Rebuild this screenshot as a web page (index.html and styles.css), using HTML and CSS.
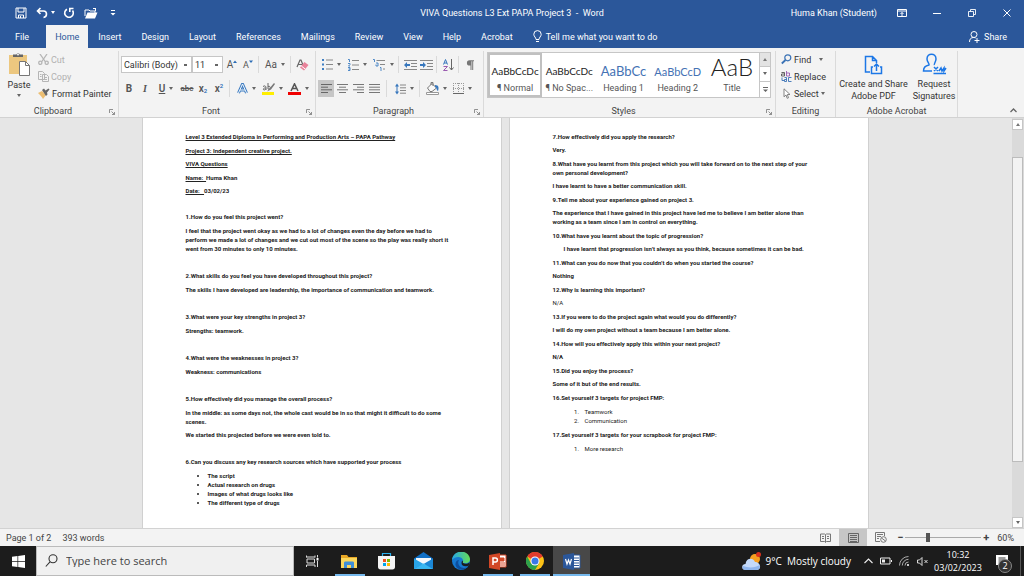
FILE: index.html
```html
<!DOCTYPE html>
<html lang="en">
<head>
<meta charset="utf-8">
<title>VIVA Questions L3 Ext PAPA Project 3 - Word</title>
<link rel="stylesheet" href="styles.css">
</head>
<body>
<div class="app">
<header class="titlebar">
  <div class="quick">
    <button class="tb-btn" aria-label="Save"><svg width="12" height="12" viewBox="0 0 12 12" fill="none" stroke="#fff"><path d="M1 1h10v10H1zM3 1v4h6V1M3.5 11V8h5v3M5.5 9v2"/></svg></button>
    <button class="tb-btn wide" aria-label="Undo"><svg width="12" height="12" viewBox="0 0 12 12" fill="none" stroke="#fff" stroke-width="1.6"><path d="M4.5 1 1.500 4l3 3M2 4h5.500c4 0 4 6 0 6.500"/></svg><i class="caret light"></i></button>
    <button class="tb-btn" aria-label="Repeat"><svg width="12" height="12" viewBox="0 0 12 12" fill="none" stroke="#fff" stroke-width="1.6"><path d="M4 2.200A4.300 4.300 0 1 0 9.500 3.500M6.800 5V1.500H10.500"/></svg></button>
    <button class="tb-btn" aria-label="Open"><svg width="14" height="12" viewBox="0 0 14 12"><path d="M1 9V3h4l1 1h5v2" fill="none" stroke="#fff"/><path d="M3.500 5.500H13.500l-2.500 6H1zM9 1h3v3h-1V2H9z" fill="#fff"/></svg></button>
    <button class="tb-btn" aria-label="Customize Quick Access Toolbar"><svg width="6" height="6" viewBox="0 0 6 6" fill="#fff"><path d="M1 0h4v1H1zM0.500 3h5L3 5.500z"/></svg></button>
  </div>
  <h1 class="doc-title">VIVA Questions L3 Ext PAPA Project 3&nbsp; -&nbsp; Word</h1>
  <div class="window-tools">
    <span class="user">Huma Khan (Student)</span>
    <button class="win-btn" aria-label="Ribbon Display Options"><svg width="10" height="8" viewBox="0 0 10 8" fill="none" stroke="#fff"><path d="M.5.5h9v7h-9zM.5 2h9M5 7V3.500M3.500 5 5 3.500 6.500 5"/></svg></button>
    <button class="win-btn" aria-label="Minimize"><svg width="8" height="8" viewBox="0 0 8 8" stroke="#fff"><path d="M0 4.500h8"/></svg></button>
    <button class="win-btn" aria-label="Restore"><svg width="8" height="8" viewBox="0 0 8 8" fill="none" stroke="#fff" stroke-width=".9"><path d="M.5 2.500h5v5h-5zM2.500 2.500v-2h5v5h-2"/></svg></button>
    <button class="win-btn" aria-label="Close"><svg width="8" height="8" viewBox="0 0 8 8" stroke="#fff"><path d="M.5.5l7 7M7.500.5l-7 7"/></svg></button>
  </div>
</header>
<nav class="tabs">
  <a class="tab file" href="#">File</a><a class="tab active" href="#">Home</a><a class="tab" href="#">Insert</a><a class="tab" href="#">Design</a><a class="tab" href="#">Layout</a><a class="tab" href="#">References</a><a class="tab" href="#">Mailings</a><a class="tab" href="#">Review</a><a class="tab" href="#">View</a><a class="tab" href="#">Help</a><a class="tab" href="#">Acrobat</a>
  <a class="tab tell" href="#"><svg width="9" height="13" viewBox="0 0 9 13" fill="none" stroke="#fff"><path d="M3 9.500C3 7.500.8 6.500.8 4.300a3.700 3.700 0 0 1 7.400 0C8.200 6.500 6 7.500 6 9.500zM3 11.500h3"/></svg>Tell me what you want to do</a>
  <a class="tab share" href="#"><svg width="11" height="12" viewBox="0 0 11 12" fill="none" stroke="#fff"><circle cx="5" cy="3.500" r="3"/><path d="M.5 11c0-3 1.500-4.500 4-4.500 1 0 1.500.2 2 .5M8 7v5M5.500 9.500h5"/></svg>Share</a>
</nav>

<section class="ribbon" aria-label="Home">
  <div class="group clipboard">
    <div class="group-body">
      <button class="paste"><svg width="23" height="24" viewBox="0 0 23 24"><path d="M1 3h18v19H1z" fill="#ecc77f"/><path d="M5 5V2.500h3.500a1.700 1.700 0 0 1 3.200 0H15V5z" fill="#666"/><circle cx="10" cy="2.500" r="1" fill="#f3f3f3"/><path d="M11.500 9.500h6l4 4v10h-10z" fill="#fff" stroke="#777"/><path d="M17.500 9.500v4h4" fill="none" stroke="#777"/></svg><span>Paste</span><i class="caret"></i></button>
      <div class="clip-list">
        <button class="cmd off"><svg width="11" height="11" viewBox="0 0 11 11" fill="none" stroke="#b5b5b5" stroke-width="1.300"><path d="M2 0l5.500 8M9 0 3.500 8"/><circle cx="2.300" cy="8.800" r="1.600"/><circle cx="8.700" cy="8.800" r="1.600"/></svg>Cut</button>
        <button class="cmd off"><svg width="11" height="11" viewBox="0 0 11 11" fill="#f3f3f3" stroke="#b5b5b5"><path d="M.5.5h4l2 2v6h-6zM4.500 3.500h4l2 2v5h-6zM6 6.500h3M6 8.500h3M2 3.500h1.500M2 5.500h1.500"/></svg>Copy</button>
        <button class="cmd"><svg width="12" height="11" viewBox="0 0 12 11"><path d="M0 5l4-2 4 4-3 4c-1-2-3-4-5-6z" fill="#ecbe72"/><path d="M4 2l2-1.500 1.500 2L10.500.5l1 1-2.500 3 .5 2L8 8z" fill="#666"/></svg>Format Painter</button>
      </div>
    </div>
    <div class="group-label">Clipboard<button class="launch" aria-label="Clipboard settings"><svg width="6" height="6" viewBox="0 0 6 6" fill="none" stroke="#777" stroke-width=".8"><path d="M.5 4V.5H4M2.500 2.500l3 3M5.500 3v2.500H3"/></svg></button></div>
  </div>

  <div class="group font">
    <div class="group-body rows">
      <div class="row">
        <select class="combo family" aria-label="Font"><option>Calibri (Body)</option></select><select class="combo size" aria-label="Font size"><option>11</option></select>
        <button class="ic letter" aria-label="Grow font">A<svg width="4" height="9" viewBox="0 0 4 9"><path d="M0 3l2-2.500L4 3z" fill="#2b6cb5"/></svg></button>
        <button class="ic letter small" aria-label="Shrink font">A<svg width="4" height="9" viewBox="0 0 4 9"><path d="M0 .5h4L2 3z" fill="#2b6cb5"/></svg></button>
        <i class="sep"></i>
        <button class="ic drop letter" aria-label="Change case">Aa<i class="caret"></i></button>
        <i class="sep"></i>
        <button class="ic" aria-label="Clear formatting"><svg width="13" height="12" viewBox="0 0 13 12"><path d="M1 8l3-7h1l2 5M2.500 5.500H6" fill="none" stroke="#666" stroke-width="1.200"/><path d="M8.500 3l4 3-4.500 5.500-4-3z" fill="#e8829a"/><path d="M5.300 7l3.900 3" stroke="#fff"/></svg></button>
      </div>
      <div class="row">
        <button class="ic letter bold">B</button><button class="ic letter italic">I</button><button class="ic drop letter under"><u>U</u><i class="caret"></i></button><button class="ic letter abc" aria-label="Strikethrough"><s>abc</s></button><button class="ic letter script" aria-label="Subscript">x<sub>2</sub></button><button class="ic letter script" aria-label="Superscript">x<sup>2</sup></button>
        <i class="sep"></i>
        <button class="ic drop" aria-label="Text effects"><svg width="11" height="11" viewBox="0 0 11 11" fill="none" stroke-linejoin="round"><path d="M1.500 10 5.500 1l4 9M3 7h5" stroke="#3d7cc1" stroke-width="3"/><path d="M1.500 10 5.500 1l4 9M3 7h5" stroke="#f3f7fb" stroke-width="1"/></svg><i class="caret"></i></button><button class="ic drop" aria-label="Highlight"><svg width="13" height="12" viewBox="0 0 13 12"><path d="M0 9h12v3H0z" fill="#ffee00"/><path d="M1 3.500c2-1.500 3 0 3 1V7M4 5C1 4.500 1 7 2 7s2-1 2-1M6 0v6c3 1.500 3-4 0-2.500" fill="none" stroke="#666"/><path d="M12 0 7 6 5 8.500 9 6.500 13 1z" fill="#777"/></svg><i class="caret"></i></button><button class="ic drop" aria-label="Font colour"><svg width="13" height="12" viewBox="0 0 13 12"><path d="M0 9h13v3H0z" fill="#f00000"/><path d="M3 8 6.500.8 10 8M4.200 5.500h4.600" fill="none" stroke="#555" stroke-width="1.500"/></svg><i class="caret"></i></button>
      </div>
    </div>
    <div class="group-label">Font<button class="launch" aria-label="Font settings"><svg width="6" height="6" viewBox="0 0 6 6" fill="none" stroke="#777" stroke-width=".8"><path d="M.5 4V.5H4M2.500 2.500l3 3M5.500 3v2.500H3"/></svg></button></div>
  </div>

  <div class="group paragraph">
    <div class="group-body rows">
      <div class="row">
        <button class="ic drop" aria-label="Bullets"><svg width="11" height="11" viewBox="0 0 11 11"><path d="M0 0h2v2H0zM0 4.500h2v2H0zM0 9h2v2H0z" fill="#3f7fc3"/><path d="M4 1h7M4 5.500h7M4 10h7" stroke="#888"/></svg><i class="caret"></i></button><button class="ic drop" aria-label="Numbering"><svg width="11" height="12" viewBox="0 0 11 12"><path d="M0 .5h1.500V3M0 4.500h2v1L.5 7H2M0 8.500h2v3H0M.5 10H2" fill="none" stroke="#3f7fc3" stroke-width=".9"/><path d="M4 1.500h7M4 6h7M4 10.500h7" stroke="#888"/></svg><i class="caret"></i></button><button class="ic drop" aria-label="Multilevel list"><svg width="13" height="12" viewBox="0 0 13 12"><path d="M0 .5h1.500V3M3 4h2v3H3V5.500M7 8.500h1V12" fill="none" stroke="#3f7fc3" stroke-width=".9"/><path d="M3.500 1.500H12M7 5.500h5M10 10h2" stroke="#888"/></svg><i class="caret"></i></button>
        <i class="sep"></i>
        <button class="ic" aria-label="Decrease indent"><svg width="13" height="10" viewBox="0 0 13 10"><path d="M0 .5h13M7 3.500h6M7 6.500h6M0 9.500h13" stroke="#888"/><path d="M0 5l3-3v2h3v2H3v2z" fill="#3777bd"/></svg></button><button class="ic" aria-label="Increase indent"><svg width="13" height="10" viewBox="0 0 13 10"><path d="M0 .5h13M7 3.500h6M7 6.500h6M0 9.500h13" stroke="#888"/><path d="M6 5 3 2v2H0v2h3v2z" fill="#3777bd"/></svg></button>
        <i class="sep"></i>
        <button class="ic" aria-label="Sort"><svg width="11" height="12" viewBox="0 0 11 12" fill="none"><path d="M.5 5.500 2.500.5l2 5M1 4h3" stroke="#3777bd"/><path d="M.5 7.500h4l-4 4h4" stroke="#9a5bb0"/><path d="M8.500 0v11M6.500 8.500l2 2.500 2-2.500" stroke="#666"/></svg></button>
        <i class="sep"></i>
        <button class="ic" aria-label="Show marks"><svg width="8" height="10" viewBox="0 0 8 10"><path d="M4.500 5.500H3.500a2.500 2.500 0 0 1 0-5.200H8v1H7.200V10h-1V1.300h-.7V10h-1z" fill="#777"/></svg></button>
      </div>
      <div class="row">
        <button class="ic on" aria-label="Align left"><svg width="11" height="9" viewBox="0 0 11 9" stroke="#666"><path d="M0 .5h11M0 3.200h7M0 5.800h11M0 8.500h7"/></svg></button><button class="ic" aria-label="Centre"><svg width="11" height="9" viewBox="0 0 11 9" stroke="#777"><path d="M0 .5h11M2 3.200h7M0 5.800h11M2 8.500h7"/></svg></button><button class="ic" aria-label="Align right"><svg width="11" height="9" viewBox="0 0 11 9" stroke="#777"><path d="M0 .5h11M4 3.200h7M0 5.800h11M4 8.500h7"/></svg></button><button class="ic" aria-label="Justify"><svg width="11" height="9" viewBox="0 0 11 9" stroke="#777"><path d="M0 .5h11M0 3.200h11M0 5.800h11M0 8.500h11"/></svg></button>
        <i class="sep wide"></i>
        <button class="ic drop" aria-label="Line spacing"><svg width="11" height="12" viewBox="0 0 11 12"><path d="M5 2h6M5 4.800h6M5 7.500h6M5 10.200h6" stroke="#888"/><path d="M0 3.500 2 .5l2 3H2.500v5H4l-2 3-2-3h1.500v-5z" fill="#3777bd"/></svg><i class="caret"></i></button>
        <i class="sep"></i>
        <button class="ic drop" aria-label="Shading"><svg width="13" height="13" viewBox="0 0 13 13"><path d="M1.500 6 6 1.500 10.500 6 6 9.500H4zM5 3V.5h2V4" fill="#f8f8f8" stroke="#777"/><path d="M9 3c4 0 4 3 3 6-2-1-1-4-3-4z" fill="#3777bd"/><path d="M.5 10.500h12v2H.5z" fill="#fff" stroke="#999"/></svg><i class="caret"></i></button><button class="ic drop" aria-label="Borders"><svg width="11" height="11" viewBox="0 0 11 11" fill="none" stroke="#999"><path d="M.5 0v10M10.500 0v10M5.500 0v10M0 .5h11M0 5.500h11" stroke-dasharray="1 1"/><path d="M0 10.500h11" stroke="#666"/></svg><i class="caret"></i></button>
      </div>
    </div>
    <div class="group-label">Paragraph<button class="launch" aria-label="Paragraph settings"><svg width="6" height="6" viewBox="0 0 6 6" fill="none" stroke="#777" stroke-width=".8"><path d="M.5 4V.5H4M2.500 2.500l3 3M5.500 3v2.500H3"/></svg></button></div>
  </div>

  <div class="group styles">
    <div class="group-body">
      <div class="gallery">
        <button class="style chosen"><span class="sample">AaBbCcDc</span><span>¶ Normal</span></button>
        <button class="style"><span class="sample">AaBbCcDc</span><span>¶ No Spac...</span></button>
        <button class="style"><span class="sample h1">AaBbCc</span><span>Heading 1</span></button>
        <button class="style"><span class="sample h2">AaBbCcD</span><span>Heading 2</span></button>
        <button class="style"><span class="sample title">AaB</span><span>Title</span></button>
        <div class="gallery-scroll"><button class="dim" aria-label="Up"><i class="caret up"></i></button><button aria-label="Down"><i class="caret"></i></button><button aria-label="More styles"><svg width="5" height="5" viewBox="0 0 5 5" fill="#666"><path d="M0 0h5v1H0zM0 2.500h5L2.500 5z"/></svg></button></div>
      </div>
    </div>
    <div class="group-label">Styles<button class="launch" aria-label="Style settings"><svg width="6" height="6" viewBox="0 0 6 6" fill="none" stroke="#777" stroke-width=".8"><path d="M.5 4V.5H4M2.500 2.500l3 3M5.500 3v2.500H3"/></svg></button></div>
  </div>

  <div class="group editing">
    <div class="group-body">
      <div class="clip-list">
        <button class="cmd"><svg width="11" height="11" viewBox="0 0 11 11" fill="none" stroke="#3a72b5"><circle cx="6.800" cy="3.800" r="3" stroke-width="1.200"/><path d="M4.500 6 .8 9.500" stroke-width="1.800"/></svg>Find<i class="caret gap"></i></button>
        <button class="cmd"><svg width="11" height="11" viewBox="0 0 11 11" fill="none" stroke-width=".9"><path d="M.5 1.500h3V5h-3V3h3" stroke="#555"/><path d="M5.500 0v5h3V2h-3" stroke="#9a5bb0"/><path d="M3.500 6.500h2v4h-2v-2h2M10.500 6.500h-3v4h3M1 6.500v3h2" stroke="#3a72b5"/></svg>Replace</button>
        <button class="cmd"><svg width="11" height="11" viewBox="0 0 11 11" fill="#fff" stroke="#777" stroke-width=".9"><path d="M3 .8v8l2-1.800 1.200 3.300 1.300-.5L6.300 6.500H9z"/></svg>Select<i class="caret"></i></button>
      </div>
    </div>
    <div class="group-label">Editing</div>
  </div>

  <div class="group adobe">
    <div class="group-body">
      <button class="big create"><svg width="19" height="20" viewBox="0 0 19 20" fill="none" stroke="#1c77e6" stroke-width="1.500"><path d="M6 17H1.500V1.500h7l4 4V8M8.500 1.500v4h4M9 12H7.500v6.500h10V12H16M12.500 16V9.500M10 11.500l2.500-2.500 2.500 2.500"/></svg><span>Create and Share<br>Adobe PDF</span></button>
      <button class="big"><svg width="25" height="22" viewBox="0 0 25 22" fill="none" stroke="#1c77e6" stroke-width="1.500"><path d="M10 18H1.500c0-4 2-5 5.500-6 .8-1-2-3-2-6 0-6.500 9-6.500 9 0 0 3-2.500 5-1.500 6M12 14l4 4M16 14l-4 4M11.500 20.500H24M17 18l2-3 1 3 2-3v3l2-3"/></svg><span>Request<br>Signatures</span></button>
    </div>
    <div class="group-label">Adobe Acrobat</div>
  </div>
  <button class="collapse" aria-label="Collapse the ribbon"><svg width="7" height="5" viewBox="0 0 7 5" fill="none" stroke="#666" stroke-width="1.300"><path d="M.5 4l3-3 3 3"/></svg></button>
</section>

<main class="workspace">
  <div class="pages">
    <article class="page">
      <section class="intro">
        <p><u>Level 3 Extended Diploma in Performing and Production Arts – PAPA Pathway</u></p>
        <p><u>Project 3: Independent creative project.</u></p>
        <p><u>VIVA Questions</u></p>
        <p><u>Name:&nbsp; </u>Huma Khan</p>
        <p><u>Date:&nbsp;&nbsp; </u>03/02/23</p>
      </section>
      <section><p>1.How do you feel this project went?</p><p>I feel that the project went okay as we had to a lot of changes even the day before we had to<br>perform we made a lot of changes and we cut out most of the scene so the play was really short it<br>went from 30 minutes to only 10 minutes.</p></section>
      <section><p>2.What skills do you feel you have developed throughout this project?</p><p>The skills I have developed are leadership, the importance of communication and teamwork.</p></section>
      <section><p>3.What were your key strengths in project 3?</p><p>Strengths: teamwork.</p></section>
      <section><p>4.What were the weaknesses in project 3?</p><p>Weakness: communications</p></section>
      <section><p>5.How effectively did you manage the overall process?</p><p>In the middle: as some days not, the whole cast would be in so that might it difficult to do some<br>scenes.</p><p>We started this projected before we were even told to.</p></section>
      <section><p>6.Can you discuss any key research sources which have supported your process</p>
        <ul><li>The script</li><li>Actual research on drugs</li><li>Images of what drugs looks like</li><li>The different type of drugs</li></ul></section>
    </article>
    <article class="page second">
      <p>7.How effectively did you apply the research?</p>
      <p>Very.</p>
      <p>8.What have you learnt from this project which you will take forward on to the next step of your<br>own personal development?</p>
      <p>I have learnt to have a better communication skill.</p>
      <p>9.Tell me about your experience gained on project 3.</p>
      <p>The experience that I have gained in this project have led me to believe I am better alone than<br>working as a team since I am in control on everything.</p>
      <p>10.What have you learnt about the topic of progression?</p>
      <p class="indent">I have learnt that progression isn’t always as you think, because sometimes it can be bad.</p>
      <p>11.What can you do now that you couldn’t do when you started the course?</p>
      <p>Nothing</p>
      <p>12.Why is learning this important?</p>
      <p class="plain">N/A</p>
      <p>13.If you were to do the project again what would you do differently?</p>
      <p>I will do my own project without a team because I am better alone.</p>
      <p>14.How will you effectively apply this within your next project?</p>
      <p>N/A</p>
      <p>15.Did you enjoy the process?</p>
      <p>Some of it but of the end results.</p>
      <p>16.Set yourself 3 targets for project FMP:</p>
      <ol class="plain"><li>Teamwork</li><li>Communication</li></ol>
      <p>17.Set yourself 3 targets for your scrapbook for project FMP:</p>
      <ol class="plain"><li>More research</li></ol>
    </article>
  </div>
  <div class="scrollbar"><button aria-label="Scroll up"><i class="caret up"></i></button><div class="track"><div class="thumb"></div></div><button aria-label="Scroll down"><i class="caret"></i></button></div>
</main>

<footer class="status">
  <span>Page 1 of 2</span><span class="words">393 words</span>
  <div class="views">
    <button aria-label="Read mode"><svg width="11" height="10" viewBox="0 0 11 10" fill="none" stroke="#777"><path d="M5.500 1.500v8M.5 1h4l1 .7 1-.7h4v7.500h-4l-1 .7-1-.7h-4zM2 3.500h2M2 5.500h2M7 3.500h2M7 5.500h2"/></svg></button>
    <button class="on" aria-label="Print layout"><svg width="11" height="10" viewBox="0 0 11 10" fill="none" stroke="#666"><path d="M.5.5h10v9H.5zM2 2.500h7M2 4.500h7M2 6.500h7M2 8.500h7" /></svg></button>
    <button aria-label="Web layout"><svg width="12" height="11" viewBox="0 0 12 11" fill="none" stroke="#777"><path d="M5 9.500H.5v-9h9V4M2 2.500h6M2 4.500h4M2 6.500h2"/><circle cx="8.500" cy="7.500" r="2.800"/><path d="M6.500 6l4 3"/></svg></button>
  </div>
  <button class="zoom-btn" aria-label="Zoom out">−</button>
  <input class="zoom" type="range" min="0" max="100" value="29" aria-label="Zoom">
  <button class="zoom-btn" aria-label="Zoom in">+</button>
  <span class="percent">60%</span>
</footer>

<footer class="taskbar">
  <button class="start" aria-label="Start"><svg width="13" height="13" viewBox="0 0 13 13" fill="#fff"><path d="M0 1.800 5.500 1v5.200H0zM6.200.9 13 0v6.200H6.200zM0 6.900h5.500V12L0 11.200zM6.200 6.900H13V13l-6.800-.9z"/></svg></button>
  <label class="search"><svg width="13" height="14" viewBox="0 0 13 14" fill="none" stroke="#333" stroke-width="1.100"><circle cx="8" cy="4.800" r="4"/><path d="M5 7.800.8 12.500"/></svg><input type="text" placeholder="Type here to search" aria-label="Search"></label>
  <div class="apps">
    <button class="app-btn" aria-label="Task view"><svg width="13" height="12" viewBox="0 0 13 12" fill="none" stroke="#ddd"><path d="M.5 2.500V.5M.5 2h8.500M9 .5v2M1 4h7.500v4H1zM.5 12v-2h8.500v2M11.500 0v2.500M11.500 6v6"/><path d="M10.500 3h2v2.500h-2z" fill="#fff" stroke="none"/></svg></button>
    <button class="app-btn run" aria-label="File Explorer"><svg width="17" height="15" viewBox="0 0 17 15"><path d="M0 1h6l1.500 2H16v11H0z" fill="#e9a825"/><path d="M0 4h16v10H0z" fill="#fbd75d"/><path d="M3 9c0-1 .5-1.500 1.500-1.500h7c1 0 1.500.5 1.500 1.500v5h-3v-3H6v3H3z" fill="#3f8fd8"/></svg></button>
    <button class="app-btn" aria-label="Microsoft Store"><svg width="17" height="18" viewBox="0 0 17 18"><path d="M4.500 5V1.500h8V5" fill="none" stroke="#29b0ee" stroke-width="1.200"/><path d="M0 4h17v11c0 1.500-1 2.500-2.500 2.500h-12C1 17.500 0 16.500 0 15z" fill="#f5f5f5"/><path d="M5 7h3v3H5z" fill="#f25022"/><path d="M9 7h3v3H9z" fill="#7fba00"/><path d="M5 11h3v3H5z" fill="#00a4ef"/><path d="M9 11h3v3H9z" fill="#ffb900"/></svg></button>
    <button class="app-btn" aria-label="Mail"><svg width="19" height="18" viewBox="0 0 19 18"><path d="M0 6.500 9.500 0 19 6.500V17H0z" fill="#0f6fc6"/><path d="M2 6h15v7H2z" fill="#f4f8fc"/><path d="M0 6.500 9.500 12 0 17z" fill="#29a4e8"/><path d="M19 6.500 9.500 12l9.500 5z" fill="#1b87d6"/><path d="M0 17l9.500-5.500L19 17z" fill="#38b6f1"/></svg></button>
    <button class="app-btn" aria-label="Edge"><svg width="18" height="18" viewBox="0 0 18 18"><defs><linearGradient id="eg"><stop stop-color="#26a7e8"/><stop offset="1" stop-color="#66dd55"/></linearGradient></defs><circle cx="9" cy="9" r="9" fill="#1679d0"/><path d="M0 8C1-3 17-3 18 7c0 4-4 5-7 4-1-.7.500-1.500 0-3C10 4 3 4 0 8z" fill="url(#eg)"/><path d="M7 8c-2 3 0 8 5 8 2 0 3.500-.8 4.500-2C13 19 5 19 3.500 13 3 10 5 8 7 8z" fill="#0d4f9e"/><path d="M11 11c2 1.200 4.500 1 6.500-.8V13c-2.500 2-8 2-8-2 0-1 .5-2 1-2.500.8 1 0 1.800.5 2.500z" fill="#1c1c1c"/></svg></button>
    <button class="app-btn run" aria-label="PowerPoint"><svg width="18" height="17" viewBox="0 0 18 17"><path d="M9 2h8v12H9z" fill="#fff" stroke="#d24726"/><path d="M11 5h4v3h-4zM11 10h5M11 12h5" fill="#d24726" stroke="#d24726"/><path d="M0 2l11-2v17L0 15z" fill="#d24726"/><path d="M4 12V5h2.500c2.500 0 2.500 4 0 4H4" fill="none" stroke="#fff" stroke-width="1.500"/></svg></button>
    <button class="app-btn run" aria-label="Chrome"><svg width="18" height="18" viewBox="0 0 18 18"><circle cx="9" cy="9" r="9" fill="#fbc116"/><path d="M9 9 1.200 4.500A9 9 0 0 1 16.800 4.500z" fill="#e33b2e"/><path d="M1.200 4.500A9 9 0 0 0 9 18l4-6.500H5z" fill="#2da14c"/><circle cx="9" cy="9" r="4.500" fill="#fff"/><circle cx="9" cy="9" r="3.500" fill="#3b78e7"/></svg></button>
    <button class="app-btn run current" aria-label="Word"><svg width="18" height="17" viewBox="0 0 18 17"><path d="M9 2h8v13H9z" fill="#fff" stroke="#2b579a"/><path d="M11 5h5M11 7.500h5M11 10h5M11 12.500h5" stroke="#2b579a"/><path d="M0 2l11-2v17L0 15z" fill="#2b579a"/><path d="M2.500 6 4 11l1.500-4L7 11l1.500-5" fill="none" stroke="#fff" stroke-width="1.200"/></svg></button>
  </div>
  <div class="tray">
    <button class="weather"><svg width="19" height="19" viewBox="0 0 19 19"><circle cx="13" cy="7" r="5" fill="#f6a021"/><circle cx="16.500" cy="2.500" r="2.500" fill="#d8321f"/><path d="M4 18c-5 0-5-6-.5-6C4 6 11 5 13 10c6 0 7 8 1.500 8z" fill="#c4dafa"/><path d="M4 18c-4 0-4-3-2.500-4 4 2 12 2 16-1 1 2 0 5-3 5z" fill="#8fb6ee"/></svg><span>9°C&nbsp; Mostly cloudy</span></button>
    <button class="tray-btn" aria-label="Show hidden icons"><svg width="9" height="6" viewBox="0 0 9 6" fill="none" stroke="#eee" stroke-width="1.100"><path d="M.5 5l4-4 4 4"/></svg></button>
    <button class="tray-btn" aria-label="Battery"><svg width="12" height="8" viewBox="0 0 12 8" fill="none" stroke="#eee"><path d="M.5 1h9.500v6H.5zM11.500 3v2"/><path d="M2 2.500h3v3H2z" fill="#eee" stroke="none"/></svg></button>
    <button class="tray-btn" aria-label="Network"><svg width="10" height="10" viewBox="0 0 10 10" fill="none" stroke="#aaa"><path d="M.5 9.500a9 9 0 0 1 9-9M3.300 9.500a6.200 6.200 0 0 1 6.200-6.200M6 9.500A3.500 3.500 0 0 1 9.500 6"/><circle cx="9" cy="9" r="1" fill="#fff" stroke="none"/></svg></button>
    <button class="tray-btn" aria-label="Muted"><svg width="11" height="9" viewBox="0 0 11 9" fill="none" stroke="#eee" stroke-width=".9"><path d="M.5 3h2l2.500-2.500v8L2.500 6h-2zM7.500 3l3 3M10.500 3l-3 3"/></svg></button>
    <button class="clock"><span>10:32</span><span>03/02/2023</span></button>
    <button class="notify" aria-label="2 notifications"><svg width="13" height="13" viewBox="0 0 13 13"><path d="M0 0h12v10H5v3l-3-3H0z" fill="#fff"/><path d="M2.500 3h7M2.500 5h7M2.500 7h5" stroke="#222" stroke-width=".9"/></svg><span class="badge">2</span></button>
  </div>
</footer>
</div>
</body>
</html>
```

FILE: styles.css
```css
* { box-sizing: border-box; }
body { margin: 0; font: 9px/12px Roboto, "Open Sans", sans-serif; color: #333; }
button, select, input { font: inherit; color: inherit; margin: 0; padding: 0; border: 0; background: none; }
button { display: flex; align-items: center; justify-content: center; }
svg { flex: none; display: block; }
p, h1, ul, ol { margin: 0; padding: 0; }
a { color: inherit; text-decoration: none; }

.app { height: 100vh; display: grid; grid-template-rows: 25px 23px 70px 1fr 17px 30px; overflow: hidden; }

.caret { flex: none; border: 2px solid transparent; border-top: 3px solid #666; border-bottom: 0; }
.caret.up { border-top: 0; border-bottom: 3px solid #777; }
.caret.light { border-top-color: #fff; }
.caret.gap { margin-left: 6px; }

/* Title bar */
.titlebar { display: grid; grid-template-columns: 1fr auto 1fr; align-items: center; background: #2b579a; color: #fff; }
.quick { display: flex; padding-left: 10px; }
.tb-btn { width: 22px; height: 24px; }
.tb-btn.wide { width: 26px; gap: 3px; }
.doc-title { font-size: 9px; font-weight: 400; }
.window-tools { display: flex; align-items: center; justify-content: flex-end; }
.user { margin-right: 7px; }
.win-btn { width: 35px; height: 24px; }

/* Tabs */
.tabs { display: flex; background: #2b579a; color: #fff; }
.tab { display: flex; align-items: center; padding: 0 10px; }
.tab.file { padding: 0 17px 0 15px; }
.tab.active { padding: 0 9px; background: #f3f3f3; color: #2b579a; }
.tell { gap: 4px; }
.share { margin-left: auto; gap: 4px; padding-right: 17px; }

/* Ribbon */
.ribbon { display: flex; background: #f3f3f3; border-bottom: 1px solid #d2d2d2; }
.group { display: flex; flex-direction: column; margin: 3px 0 0; border-right: 1px solid #dadada; }
.group-body { flex: 1; min-height: 0; display: flex; }
.group-label { position: relative; padding-right: 12px; text-align: center; color: #444; }
.editing .group-label, .adobe .group-label { padding-right: 0; }
.launch { position: absolute; right: 3px; top: 4px; }
.clipboard { width: 119px; }
.font { width: 197px; }
.paragraph { width: 168px; }
.styles { width: 292px; }
.editing { width: 60px; }
.adobe { width: 122px; }
.paste { flex-direction: column; justify-content: flex-start; width: 30px; margin-left: 4px; padding-top: 1px; gap: 3px; }
.clip-list { display: grid; grid-template-rows: repeat(3, 17px); padding: 0 4px; align-content: start; }
.editing .clip-list { padding: 0 5px; }
.cmd { justify-content: flex-start; gap: 2px; white-space: nowrap; }
.off { color: #b1b1b1; }

.rows { flex-direction: column; gap: 7px; padding: 5px 2px 0; }
.row { display: flex; height: 17px; }
.ic { width: 16px; height: 17px; }
.ic.drop { width: 26px; gap: 4px; }
.ic.on { background: #c6c6c6; }
.sep { width: 1px; margin: 0 3px 0 2px; background: #dadada; }
.sep.wide { margin: 0 4px; }
.letter { color: #555; font-size: 10px; }
.letter.small { font-size: 9px; }
.bold { font-weight: 700; }
.italic { font-family: "Liberation Serif", serif; font-style: italic; font-weight: 700; }
.under, .abc { font-weight: 600; }
.abc { font-size: 8px; }
.script { font-weight: 600; }
.script sub, .script sup { font-size: 6px; line-height: 6px; color: #2b6cb5; }
.script sub { align-self: flex-end; padding-bottom: 3px; }
.script sup { align-self: flex-start; padding-top: 3px; }
.combo { appearance: none; border: 1px solid #c6c6c6; padding: 0 2px; background: #fff linear-gradient(#666, #666) no-repeat right 4px center / 3px 2px; }
.family { width: 71px; }
.size { width: 31px; margin-right: 1px; }

.gallery { display: flex; flex: 1; height: 46px; margin: 1px 4px 0 3px; border: 1px solid #c6c6c6; background: #fff; }
.style { flex: 1 1 0; min-width: 0; flex-direction: column; justify-content: flex-end; white-space: nowrap; color: #555; gap: 3px; padding: 0 3px 3px; }
.style.chosen { border: 2px solid #c0c0c0; padding: 0 1px 1px; }
.sample { font: 10px/15px Lato, sans-serif; color: #222; }
.h1 { font-size: 13px; color: #4472b4; }
.h2 { font-size: 11px; color: #4472b4; }
.sample.title { font-size: 24px; line-height: 24px; font-weight: 300; }
.gallery-scroll { display: grid; width: 11px; border-left: 1px solid #c6c6c6; }
.gallery-scroll button + button { border-top: 1px solid #c6c6c6; }
.dim { background: #e3e3e3; }
.big { flex-direction: column; justify-content: flex-start; padding-top: 2px; width: 46px; gap: 3px; white-space: nowrap; }
.big.create { width: 75px; padding-top: 4px; }
.collapse { margin-left: auto; align-self: flex-end; width: 22px; height: 14px; }

/* Document */
.workspace { display: flex; min-height: 0; background: #e6e6e6; border-bottom: 1px solid #d2d2d2; }
.pages { flex: 1; display: flex; justify-content: center; gap: 9px; padding-right: 2px; overflow: hidden; }
.page { width: 358px; padding: 14px 43px 0; background: #fff; color: #222; font: 700 6px/9px Roboto, sans-serif; box-shadow: 0 0 0 1px #d0d0d0; white-space: nowrap; }
.page section { margin-bottom: 18px; }
.page .intro { margin-bottom: 17px; }
.page section p + p, .page ul { margin-top: 5px; }
.page section p + p:nth-child(odd) { margin-top: 4px; }
.second p { margin-bottom: 4px; }
.second p:nth-child(even), .second p:nth-child(n+19), .second ol { margin-bottom: 5px; }
.page .indent { padding-left: 11px; }
.page .plain { font-weight: 400; }
.page ul { padding-left: 22px; }
.page ol { padding-left: 28px; }
.page ol li { padding-left: 4px; }
.scrollbar { display: flex; flex-direction: column; width: 12px; background: #dadada; padding: 1px 1px 0 0; }
.scrollbar button { height: 11px; background: #fff; border: 1px solid #c6c6c6; }
.track { flex: 1; display: flex; flex-direction: column; padding: 27px 0 55px; }
.thumb { flex: 1; background: #f3f3f3; border: 1px solid #bcbcbc; }

/* Status bar */
.status { display: flex; align-items: center; background: #f3f3f3; padding: 0 10px 0 6px; color: #444; }
.words { margin-left: 11px; }
.views { display: flex; align-self: stretch; margin-left: auto; }
.views button { width: 28px; }
.views .on { background: #c6c6c6; }
.zoom-btn { width: 10px; font-size: 11px; font-weight: 700; }
.zoom { appearance: none; width: 76px; height: 11px; background: linear-gradient(#aaa, #aaa) no-repeat center / 100% 1px; }
.zoom::-webkit-slider-thumb { appearance: none; width: 4px; height: 9px; background: #555; }
.percent { margin-left: 6px; }

/* Taskbar */
.taskbar { display: flex; background: #1c1c1c; color: #fff; font-family: "Open Sans", sans-serif; font-size: 10px; }
.start { width: 36px; }
.search { display: flex; align-items: center; width: 258px; padding-left: 8px; gap: 8px; background: #f0f0f0; border: 1px solid #bbb; }
.search input { flex: 1; min-width: 0; font-size: 11px; }
.search input::placeholder { color: #444; opacity: 1; }
.apps { display: flex; }
.app-btn { width: 37px; }
.run { background: linear-gradient(#76b9ed, #76b9ed) no-repeat center bottom / 30px 2px; }
.current { background-color: #484848; background-size: 100% 2px; }
.tray { display: flex; margin-left: auto; }
.weather { gap: 4px; margin-right: 8px; white-space: nowrap; }
.tray-btn { width: 18px; }
.clock { flex-direction: column; width: 54px; font-size: 9px; line-height: 13px; }
.notify { position: relative; width: 36px; border-right: 1px solid #555; margin-right: 3px; }
.badge { position: absolute; right: 8px; bottom: 3px; width: 14px; height: 14px; border-radius: 50%; border: 1px solid #888; background: #333; font-size: 9px; line-height: 12px; }
```
